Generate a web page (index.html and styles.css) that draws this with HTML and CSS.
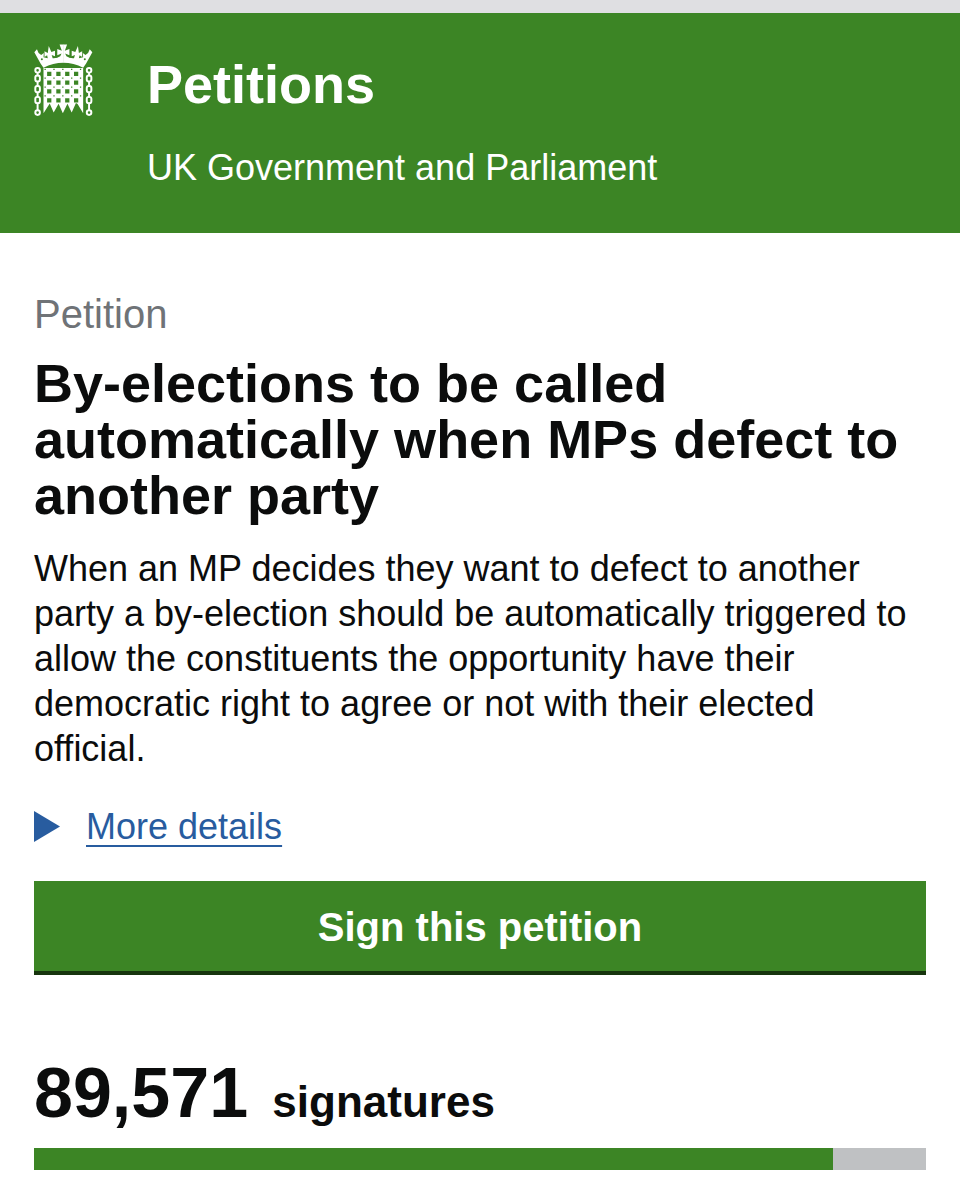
FILE: index.html
```html
<!DOCTYPE html>
<html lang="en">
<head>
<meta charset="utf-8">
<meta name="viewport" content="width=device-width, initial-scale=1">
<title>Petitions</title>
<link rel="stylesheet" href="styles.css">
</head>
<body>
<header class="header">
  <svg class="crest" viewBox="28 24 180 220" aria-hidden="true">
    <defs>
      <g id="chain" fill="none" stroke="#fff" stroke-width="6">
        <circle cx="39" cy="103" r="7"/>
        <rect x="32" y="119" width="14" height="18" rx="6"/>
        <rect x="32" y="151" width="14" height="19" rx="6"/>
        <rect x="32" y="184" width="14" height="19" rx="6"/>
        <circle cx="39" cy="232" r="7"/>
        <path d="M39 109v12M39 136v17M39 169v17M39 202v24"/>
      </g>
      <path id="half-crown" d="M118 80Q86 80 57 95L48 82L29 48L37 39L42 50L50 56L58 50L57 63L70 66L68 57L60 62V45L70 50L73 29L81 47L92 43V60L82 56L85 66Q98 67 108 60L112 52L99 57V38L113 43L106 24H118Z"/>
    </defs>
    <use href="#chain"/>
    <use href="#chain" transform="matrix(-1 0 0 1 235 0)"/>
    <g fill="#fff">
      <use href="#half-crown"/>
      <use href="#half-crown" transform="matrix(-1 0 0 1 235 0)"/>
    </g>
    <path fill="#fff" fill-rule="evenodd" d="M57 96H178V234L161 206L156 203L143 232L130 205L116 234L103 205L88 232L76 204L57 234ZM68 107h13v13h-13zM96 107h13v13h-13zM123 107h13v13h-13zM150 107h13v13h-13zM68 134h13v13h-13zM96 134h13v13h-13zM123 134h13v13h-13zM150 134h13v13h-13zM68 161h13v13h-13zM96 161h13v13h-13zM123 161h13v13h-13zM150 161h13v13h-13zM68 188h13v13h-13zM96 188h13v13h-13zM123 188h13v13h-13zM150 188h13v13h-13z"/>
    <g stroke="#3c8525" stroke-width="4" stroke-dasharray="4 23">
      <path d="M60 100H178M60 127H178M60 154H178M60 181H178"/>
    </g>
    <g fill="#3c8525"><circle cx="52" cy="69" r="3"/><circle cx="97" cy="62" r="2"/><circle cx="138" cy="62" r="2"/><circle cx="183" cy="69" r="3"/></g>
  </svg>
  <div class="brand">
    <a class="brand-name" href="#">Petitions</a>
    <span class="brand-owner">UK Government and Parliament</span>
  </div>
</header>
<main class="main">
  <h1 class="title"><span class="kind">Petition</span> By-elections to be called automatically when MPs defect to another party</h1>
  <p class="intro">When an MP decides they want to defect to another party a by-election should be automatically triggered to allow the constituents the opportunity have their democratic right to agree or not with their elected official.</p>
  <details class="details">
    <summary class="summary"><svg class="arrow" viewBox="0 0 26 31" aria-hidden="true"><path d="M0 0L26 15.500L0 31Z" fill="#285c9f"/></svg><span class="summary-text">More details</span></summary>
  </details>
  <button class="sign" type="button">Sign this petition</button>
  <p class="count"><span class="number">89,571</span> signatures</p>
  <div class="track" role="progressbar" aria-label="Signatures" aria-valuenow="89571" aria-valuemin="0" aria-valuemax="100000"><div class="bar" style="width:89.571%"></div></div>
</main>
</body>
</html>
```
FILE: styles.css
```css
* { box-sizing: border-box; }
body {
  margin: 0;
  border-top: 13px solid #dfdfe2;
  background: #fff;
  color: #0b0c0c;
  font-family: "Liberation Sans", Arial, sans-serif;
  font-size: 36px;
  line-height: 45px;
}
.header {
  display: flex;
  align-items: flex-start;
  gap: 54px;
  padding: 31px 34px 42px;
  background: #3c8525;
  color: #fff;
}
.crest { flex: none; width: 59px; height: 73px; }
.brand { display: flex; flex-direction: column; gap: 33px; padding-top: 12px; }
.brand-name {
  color: #fff;
  font-size: 54px;
  font-weight: bold;
  line-height: 56px;
  text-decoration: none;
}
.brand-owner { line-height: 46px; }
.main { padding: 57px 34px 28px; }
.title { margin: 0; font-size: 54px; line-height: 56px; }
.kind {
  display: block;
  margin-bottom: 17px;
  color: #6f7377;
  font-size: 40px;
  font-weight: normal;
  line-height: 48px;
}
.intro { margin: 23px 0 33px; }
.summary {
  display: flex;
  align-items: center;
  gap: 26px;
  width: fit-content;
  color: #285c9f;
  list-style: none;
  cursor: pointer;
}
.arrow { width: 26px; height: 31px; }
.summary-text {
  text-decoration: underline;
  text-decoration-thickness: 2px;
  text-decoration-skip-ink: none;
  text-underline-offset: 6px;
}
.sign {
  display: block;
  width: 100%;
  margin: 32px 0 78px;
  padding: 21px 20px 19px;
  border: 0;
  border-bottom: 4px solid #17350e;
  border-radius: 0;
  background: #3c8525;
  color: #fff;
  font: bold 40px/50px "Liberation Sans", Arial, sans-serif;
}
.count { margin: 0 0 6px; font-size: 44px; font-weight: bold; line-height: 80px; }
.number { margin-right: 12px; font-size: 70px; }
.track { height: 22px; background: #bfc1c3; }
.bar { height: 100%; background: #3c8525; }
```
